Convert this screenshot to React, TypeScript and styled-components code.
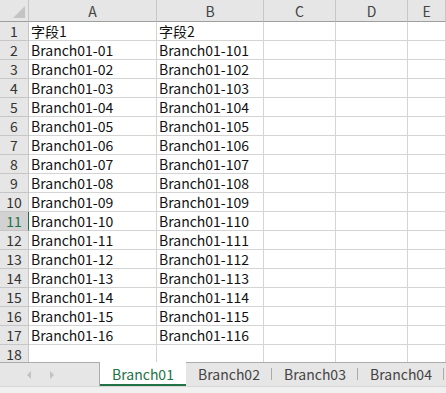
import React, { ReactElement } from "react"
import styled, { createGlobalStyle } from "styled-components"

const GlobalStyle = createGlobalStyle`
	html, body {
		margin: 0;
		padding: 0;
		background: #ffffff;
	}
	body {
		font-family: "Noto Sans CJK SC", "Noto Sans", sans-serif;
	}
`

const columns = ["A", "B", "C", "D", "E"]
const columnWidths = "29px 128px 107px 72px 72px 1fr"
const rowCount = 18
const selectedRow = 11
const tabs = ["Branch01", "Branch02", "Branch03", "Branch04"]

const Window = styled.div`
	width: 446px;
	height: 393px;
	display: flex;
	flex-direction: column;
	overflow: hidden;
	background: #ffffff;
`

const SheetArea = styled.div`
	flex: 1;
	overflow: hidden;
`

const Grid = styled.div`
	display: grid;
	grid-template-columns: ${columnWidths};
	grid-template-rows: 22px repeat(${rowCount - 1}, 19px) 17px;
`

const Corner = styled.div`
	position: relative;
	background: #e6e6e6;
	border-right: 1px solid #c6c6c6;
	border-bottom: 1px solid #9e9e9e;
	&::after {
		content: "";
		position: absolute;
		right: 3px;
		bottom: 3px;
		width: 0;
		height: 0;
		border-left: 12px solid transparent;
		border-bottom: 12px solid #c4c4c4;
	}
`

const ColumnHeader = styled.div`
	background: #e6e6e6;
	border-right: 1px solid #c6c6c6;
	border-bottom: 1px solid #9e9e9e;
	color: #444444;
	font-size: 14px;
	line-height: 16px;
	display: flex;
	align-items: center;
	justify-content: center;
	white-space: nowrap;
	overflow: hidden;
`

const RowHeader = styled.div<{ $selected?: boolean; $last?: boolean }>`
	background: ${(p): string => (p.$selected ? "#d2d2d2" : "#e6e6e6")};
	border-right: 1px solid ${(p): string => (p.$selected ? "#217346" : "#c6c6c6")};
	border-bottom: ${(p): string => (p.$last ? "none" : "1px solid #c6c6c6")};
	color: ${(p): string => (p.$selected ? "#217346" : "#333333")};
	font-size: 14px;
	line-height: 16px;
	display: flex;
	align-items: center;
	justify-content: center;
`

const Cell = styled.div<{ $last?: boolean }>`
	border-right: 1px solid #d4d4d4;
	border-bottom: ${(p): string => (p.$last ? "none" : "1px solid #d4d4d4")};
	color: #111111;
	font-size: 14px;
	line-height: 16px;
	padding-left: 2px;
	display: flex;
	align-items: center;
	white-space: nowrap;
	overflow: hidden;
`

const TabBar = styled.div`
	height: 24px;
	flex-shrink: 0;
	display: flex;
	background: #e6e6e6;
`

const ScrollButtons = styled.div`
	width: 100px;
	border-top: 1px solid #ababab;
	border-right: 1px solid #ababab;
	display: flex;
	align-items: center;
	gap: 19px;
	padding-left: 27px;
	box-sizing: border-box;
`

const Arrow = styled.span<{ $dir: "left" | "right" }>`
	width: 0;
	height: 0;
	border-top: 4px solid transparent;
	border-bottom: 4px solid transparent;
	${(p): string =>
		p.$dir === "left"
			? "border-right: 4px solid #c2c2c2;"
			: "border-left: 4px solid #c2c2c2;"}
`

const Tab = styled.div<{ $active?: boolean }>`
	position: relative;
	width: 86px;
	box-sizing: border-box;
	display: flex;
	align-items: center;
	justify-content: center;
	font-size: 14px;
	color: ${(p): string => (p.$active ? "#217346" : "#444444")};
	background: ${(p): string => (p.$active ? "#ffffff" : "transparent")};
	border-top: 1px solid ${(p): string => (p.$active ? "#ffffff" : "#ababab")};
	border-bottom: 2px solid ${(p): string => (p.$active ? "#217346" : "transparent")};
	&::after {
		content: "";
		position: absolute;
		right: 0;
		top: 5px;
		bottom: 4px;
		width: 1px;
		background: ${(p): string => (p.$active ? "transparent" : "#ababab")};
	}
`

const TabFill = styled.div`
	flex: 1;
	border-top: 1px solid #ababab;
`

const BottomStrip = styled.div`
	height: 7px;
	flex-shrink: 0;
	box-sizing: border-box;
	background: #f0f0f0;
	border-top: 1px solid #d6d6d6;
`

const cellText = (row: number, col: number): string => {
	if (row === 1) {
		if (col === 0) return "字段1"
		if (col === 1) return "字段2"
		return ""
	}
	if (row > 17) return ""
	const n = row - 1
	if (col === 0) return `Branch01-${String(n).padStart(2, "0")}`
	if (col === 1) return `Branch01-${100 + n}`
	return ""
}

export default function App(): ReactElement {
	const rows = Array.from({ length: rowCount }, (_, i) => i + 1)

	return (
		<>
			<GlobalStyle />
			<Window>
				<SheetArea>
					<Grid>
						<Corner />
						{columns.map((c) => (
							<ColumnHeader key={c}>{c}</ColumnHeader>
						))}
						{rows.map((r) => (
							<React.Fragment key={r}>
								<RowHeader $selected={r === selectedRow} $last={r === rowCount}>
									{r}
								</RowHeader>
								{columns.map((c, ci) => (
									<Cell key={c} $last={r === rowCount}>
										{cellText(r, ci)}
									</Cell>
								))}
							</React.Fragment>
						))}
					</Grid>
				</SheetArea>
				<TabBar>
					<ScrollButtons>
						<Arrow $dir="left" />
						<Arrow $dir="right" />
					</ScrollButtons>
					{tabs.map((t, i) => (
						<Tab key={t} $active={i === 0}>
							{t}
						</Tab>
					))}
					<TabFill />
				</TabBar>
				<BottomStrip />
			</Window>
		</>
	)
}
